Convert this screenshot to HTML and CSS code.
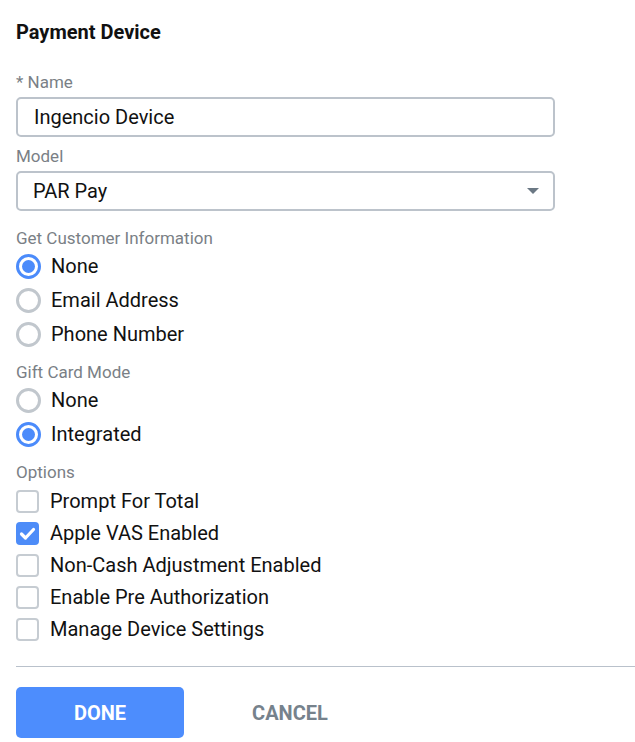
FILE: index.html
```html
<!DOCTYPE html>
<html lang="en">
<head>
    <meta charset="UTF-8">
    <meta name="viewport" content="width=device-width, initial-scale=1.0">
    <title>Payment Device</title>
    <link rel="stylesheet" href="styles.css">
</head>
<body>
    <div class="panel">
        <h2 class="title">Payment Device</h2>

        <div class="field">
            <label class="field-label" for="device_name">* Name</label>
            <input class="text-input" type="text" id="device_name" value="Ingencio Device">
        </div>

        <div class="field">
            <div class="field-label">Model</div>
            <div class="select">
                <span>PAR Pay</span>
                <span class="select-arrow"></span>
            </div>
        </div>

        <div class="group radio-group first-group">
            <div class="field-label">Get Customer Information</div>
            <div class="radio-row"><span class="radio checked"></span>None</div>
            <div class="radio-row"><span class="radio"></span>Email Address</div>
            <div class="radio-row"><span class="radio"></span>Phone Number</div>
        </div>

        <div class="group radio-group">
            <div class="field-label">Gift Card Mode</div>
            <div class="radio-row"><span class="radio"></span>None</div>
            <div class="radio-row"><span class="radio checked"></span>Integrated</div>
        </div>

        <div class="group">
            <div class="field-label options-label">Options</div>
            <div class="check-row"><span class="check"></span>Prompt For Total</div>
            <div class="check-row">
                <span class="check checked">
                    <svg width="23" height="23" viewBox="0 0 23 23"><path d="M5.5 12 L9.5 16 L17.5 7.5" fill="none" stroke="#fff" stroke-width="3.2" stroke-linecap="round" stroke-linejoin="round"/></svg>
                </span>Apple VAS Enabled
            </div>
            <div class="check-row"><span class="check"></span>Non-Cash Adjustment Enabled</div>
            <div class="check-row"><span class="check"></span>Enable Pre Authorization</div>
            <div class="check-row"><span class="check"></span>Manage Device Settings</div>
        </div>

        <hr class="divider">

        <div class="actions">
            <button class="btn btn-primary">DONE</button>
            <button class="btn btn-flat">CANCEL</button>
        </div>
    </div>
</body>
</html>
```

FILE: styles.css
```css
body {
    font-family: Roboto, "Liberation Sans", Arial, sans-serif;
    margin: 0;
    padding: 0;
    background-color: #fff;
    color: #111;
}
.panel {
    padding: 20px 0 0 16px;
}
.title {
    font-size: 20px;
    font-weight: 700;
    line-height: 24px;
    margin: 0 0 28px 0;
}
.field {
    width: 539px;
    margin-bottom: 9px;
}
.field-label {
    display: block;
    font-size: 17px;
    line-height: 20px;
    color: #7a7f86;
    margin-bottom: 5px;
}
.text-input,
.select {
    display: flex;
    align-items: center;
    width: 100%;
    height: 40px;
    box-sizing: border-box;
    border: 2px solid #bcc3cb;
    border-radius: 5px;
    padding: 0 15px;
    font-family: inherit;
    font-size: 20px;
    color: #111;
    margin: 0;
}
.text-input {
    padding-left: 16px;
    outline: none;
}
.select {
    justify-content: space-between;
    padding-right: 14px;
}
.select-arrow {
    width: 0;
    height: 0;
    border-left: 6px solid transparent;
    border-right: 6px solid transparent;
    border-top: 6px solid #6b7884;
}
.group {
    margin-top: 11px;
}
.first-group {
    margin-top: 17px;
}
.group .field-label {
    margin-bottom: 0;
}
.radio-group .field-label {
    margin-bottom: 1px;
}
.radio-row,
.check-row {
    display: flex;
    align-items: center;
    font-size: 20px;
}
.radio-row {
    height: 34px;
}
.check-row {
    height: 32px;
}
.options-label {
    padding-bottom: 3px;
}
.radio {
    width: 25px;
    height: 25px;
    box-sizing: border-box;
    border: 3px solid #c1c7cd;
    border-radius: 50%;
    margin-right: 10px;
    display: flex;
    align-items: center;
    justify-content: center;
}
.radio.checked {
    border-color: #4b8bfb;
}
.radio.checked::after {
    content: "";
    width: 13px;
    height: 13px;
    border-radius: 50%;
    background-color: #4b8bfb;
}
.check {
    width: 23px;
    height: 23px;
    box-sizing: border-box;
    border: 2px solid #c6ccd2;
    border-radius: 4px;
    margin-right: 11px;
}
.check.checked {
    border: none;
    background-color: #4d8cf8;
}
.check svg {
    display: block;
}
.divider {
    border: none;
    border-top: 1px solid #b9c1cb;
    margin: 21px 0 20px 0;
}
.actions {
    display: flex;
    gap: 22px;
}
.btn {
    width: 168px;
    height: 51px;
    border: none;
    border-radius: 5px;
    font-family: inherit;
    font-size: 20px;
    font-weight: 700;
    cursor: pointer;
}
.btn-primary {
    background-color: #4d8dfd;
    color: #fff;
}
.btn-primary:hover {
    background-color: #3b7cf0;
}
.btn-flat {
    background: none;
    color: #76828c;
}
```
